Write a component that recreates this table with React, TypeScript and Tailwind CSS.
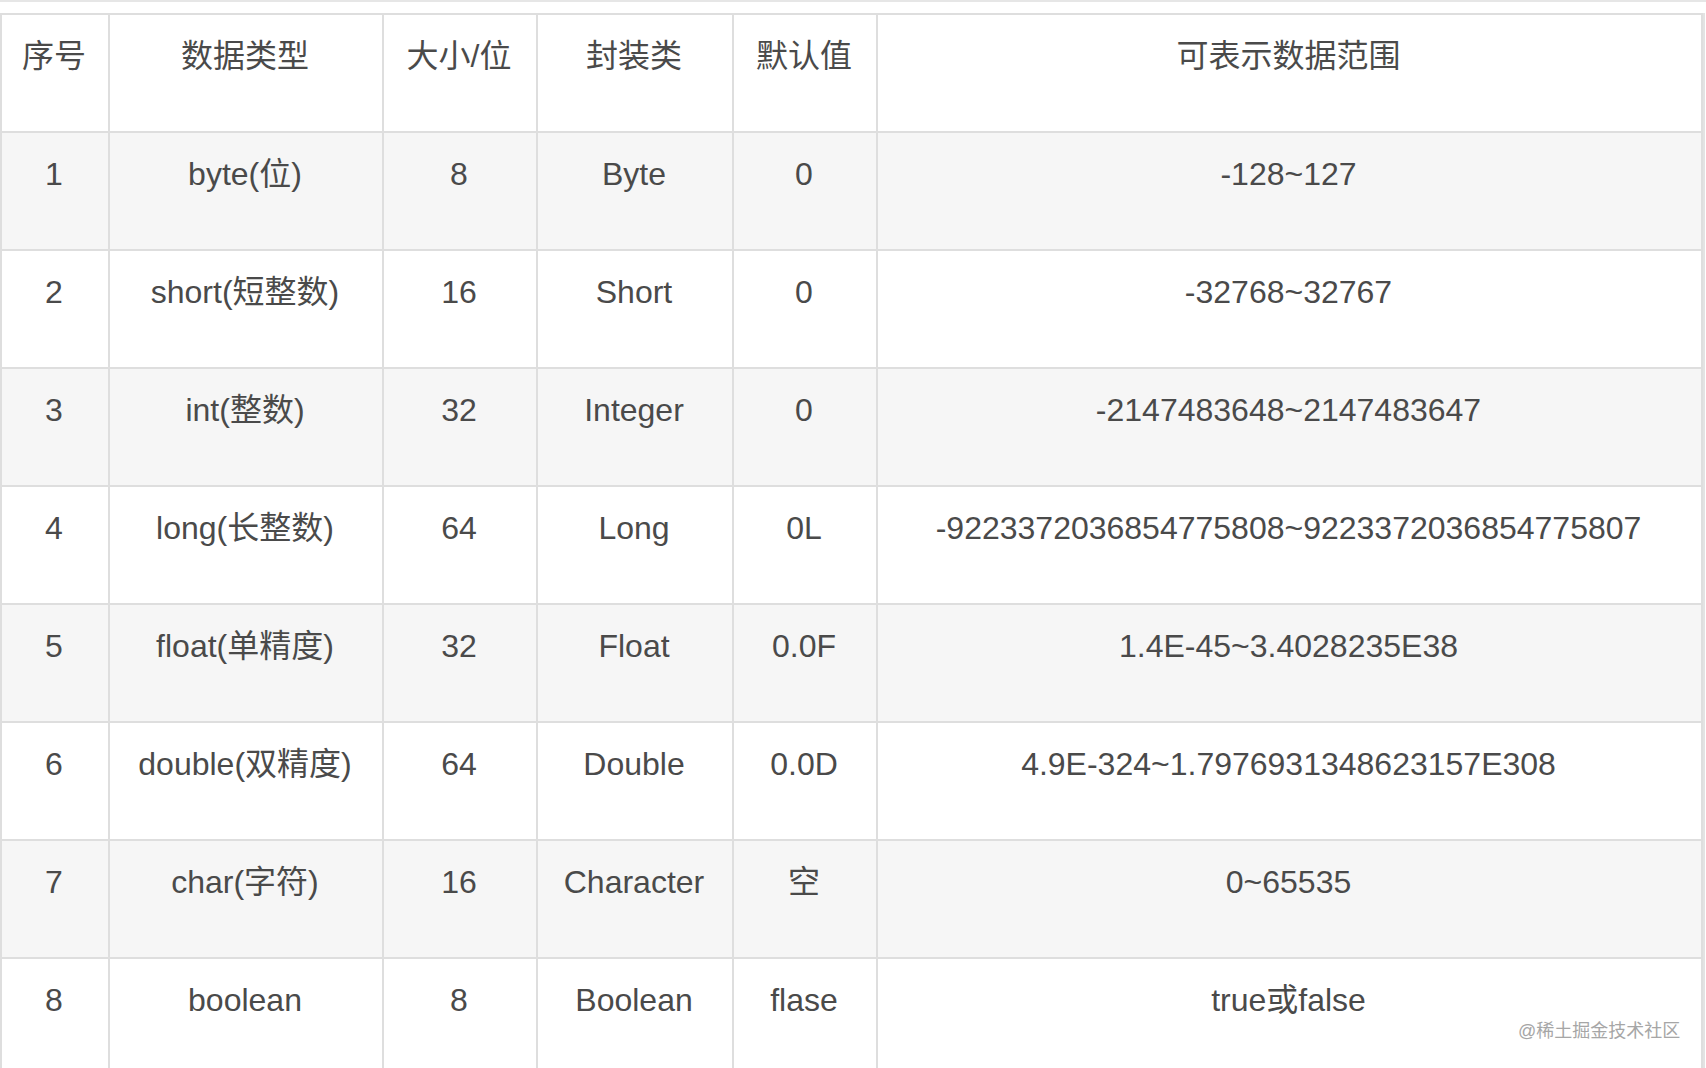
const headers = ["序号", "数据类型", "大小/位", "封装类", "默认值", "可表示数据范围"];

const rows: string[][] = [
  ["1", "byte(位)", "8", "Byte", "0", "-128~127"],
  ["2", "short(短整数)", "16", "Short", "0", "-32768~32767"],
  ["3", "int(整数)", "32", "Integer", "0", "-2147483648~2147483647"],
  ["4", "long(长整数)", "64", "Long", "0L", "-9223372036854775808~9223372036854775807"],
  ["5", "float(单精度)", "32", "Float", "0.0F", "1.4E-45~3.4028235E38"],
  ["6", "double(双精度)", "64", "Double", "0.0D", "4.9E-324~1.7976931348623157E308"],
  ["7", "char(字符)", "16", "Character", "空", "0~65535"],
  ["8", "boolean", "8", "Boolean", "flase", "true或false"],
];

function Cell({ text }: { text: string }) {
  return (
    <div className="h-[118px] border-r-2 border-b-2 border-[#dedede] pt-[17px] pr-[2px] text-center leading-[48px] whitespace-nowrap">
      {text}
    </div>
  );
}

export default function App() {
  return (
    <div
      className="relative w-[1706px] h-[1068px] overflow-hidden bg-white border-t-2 border-[#e6e6e6] pt-[11px] text-[32px] text-[#4a4a4a]"
      style={{ fontFamily: '"Liberation Sans", "Noto Sans CJK SC", sans-serif' }}
    >
      <div className="w-[1705px] border-r-2 border-[#e3e3e3]">
        <div className="grid w-[1703px] grid-cols-[108px_274px_154px_196px_144px_825px] border-l-2 border-t-2 border-[#dedede]">
          {headers.map((h) => (
            <Cell key={h} text={h} />
          ))}
          {rows.map((row, i) => (
            <div key={i} className={`contents ${i % 2 === 0 ? "[&>div]:bg-[#f6f6f6]" : "[&>div]:bg-white"}`}>
              {row.map((c, j) => (
                <Cell key={j} text={c} />
              ))}
            </div>
          ))}
        </div>
      </div>
      <div className="absolute left-[1518px] top-[1018px] text-[18px] leading-[22px] text-[#a6a6a6] [text-shadow:0_0_2px_#fff]">
        @稀土掘金技术社区
      </div>
    </div>
  );
}
